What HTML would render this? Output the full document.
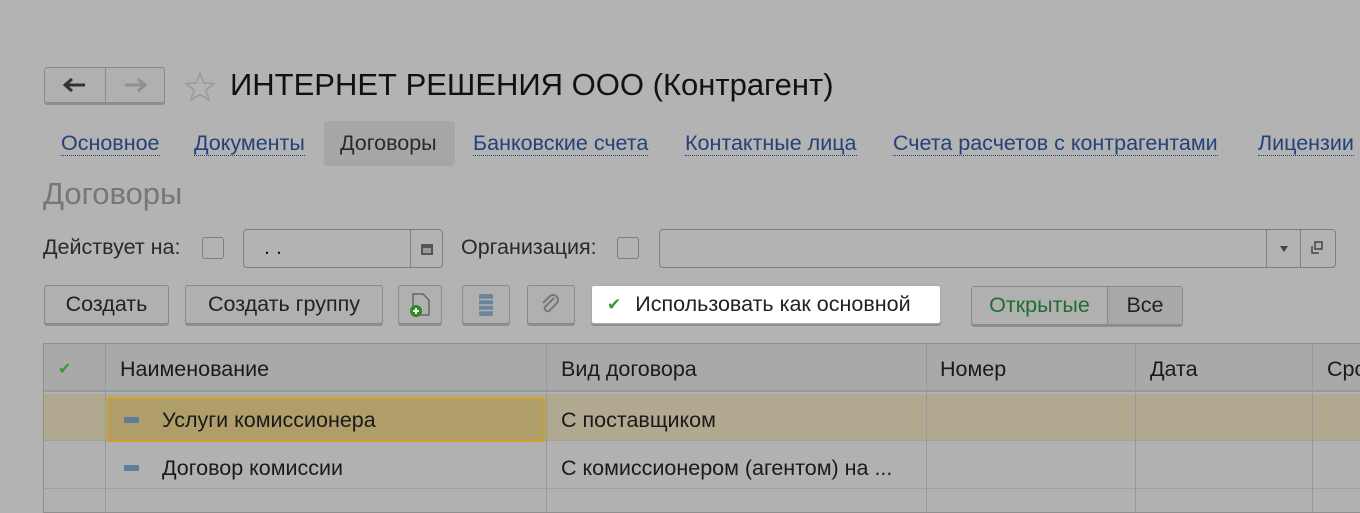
<!DOCTYPE html>
<html><head><meta charset="utf-8"><style>
*{box-sizing:border-box;margin:0;padding:0}
body{width:1360px;height:503px;overflow:hidden;background:#b3b3b3;font-family:"Liberation Sans",sans-serif;color:#1a1a1a;position:relative}
.a{position:absolute}
.btn{position:absolute;border:1px solid #8a8a8a;border-radius:3px;background:#b0b0b0;box-shadow:0 2px 0 #8e8e8e;font-size:21.5px;color:#222;display:flex;align-items:center;justify-content:center}
.tab{position:absolute;top:131px;font-size:21.5px;color:#23427a;border-bottom:1px dotted #23427a;line-height:24px}
.cb{position:absolute;width:22px;height:22px;border:1px solid #7e7e7e;border-radius:3px}
.col{position:absolute;top:0;height:100%;border-left:1px solid #999}
.t{font-size:21.5px}
</style></head><body>
<div class="btn" style="left:44px;top:67px;width:121px;height:36px;justify-content:flex-start">
 <div style="width:61px;height:34px;border-right:1px solid #8a8a8a;display:flex;align-items:center;justify-content:center"><svg width="24" height="16"><path d="M2 8H22M9 2L2 8L9 14" stroke="#333" stroke-width="3" fill="none"/></svg></div>
 <div style="width:58px;display:flex;justify-content:center"><svg width="24" height="16"><path d="M2 8H22M15 2L22 8L15 14" stroke="#909090" stroke-width="3" fill="none"/></svg></div>
</div>
<svg class="a" style="left:184px;top:71px" width="32" height="32"><path d="M16 2L20 12L30 12.5L22 19L25 29L16 23.5L7 29L10 19L2 12.5L12 12Z" fill="none" stroke="#999" stroke-width="1.5"/></svg>
<div class="a" style="left:230px;top:67px;font-size:31px;color:#111">ИНТЕРНЕТ РЕШЕНИЯ ООО (Контрагент)</div>
<div class="a" style="left:324px;top:121px;width:131px;height:45px;background:#a6a6a6;border-radius:4px"></div>
<div class="tab" style="left:61px">Основное</div>
<div class="tab" style="left:194px">Документы</div>
<div class="tab" style="left:340px;border:none;color:#2a2a2a">Договоры</div>
<div class="tab" style="left:473px">Банковские счета</div>
<div class="tab" style="left:685px">Контактные лица</div>
<div class="tab" style="left:893px">Счета расчетов с контрагентами</div>
<div class="tab" style="left:1258px">Лицензии</div>
<div class="a" style="left:43px;top:176px;font-size:31px;color:#777">Договоры</div>
<div class="a t" style="left:43px;top:235px;color:#2a2a2a">Действует на:</div>
<div class="cb" style="left:202px;top:237px"></div>
<div class="a" style="left:243px;top:229px;width:200px;height:39px;border:1px solid #7e7e7e;border-radius:4px">
 <div class="a t" style="left:20px;top:5px">. .</div>
 <div class="a" style="left:166px;top:0;height:37px;border-left:1px solid #7e7e7e;width:32px;display:flex;align-items:center;justify-content:center"><svg width="14" height="14"><rect x="1" y="2" width="12" height="11" fill="#555"/><rect x="3" y="6" width="8" height="5" fill="#999"/></svg></div>
</div>
<div class="a t" style="left:461px;top:235px;color:#2a2a2a">Организация:</div>
<div class="cb" style="left:617px;top:237px"></div>
<div class="a" style="left:659px;top:229px;width:677px;height:39px;border:1px solid #7e7e7e;border-radius:4px">
 <div class="a" style="left:606px;top:0;height:37px;width:35px;border-left:1px solid #7e7e7e;border-right:1px solid #7e7e7e;display:flex;align-items:center;justify-content:center"><svg width="8" height="6"><path d="M0 0H8L4 6Z" fill="#444"/></svg></div>
 <div class="a" style="left:650px;top:11px"><svg width="14" height="14"><rect x="5" y="1" width="7" height="7" fill="none" stroke="#444" stroke-width="1.5"/><path d="M2 5V12H9" fill="none" stroke="#444" stroke-width="1.5"/></svg></div>
</div>
<div class="btn" style="left:44px;top:285px;width:125px;height:39px">Создать</div>
<div class="btn" style="left:185px;top:285px;width:198px;height:39px">Создать группу</div>
<div class="btn" style="left:398px;top:285px;width:44px;height:39px"><svg width="24" height="26"><path d="M5 2H15L21 8V23H5Z" fill="none" stroke="#666" stroke-width="1.5"/><circle cx="8" cy="19" r="6" fill="#2a8a2a"/><path d="M8 16V22M5 19H11" stroke="#fff" stroke-width="2"/></svg></div>
<div class="btn" style="left:462px;top:285px;width:48px;height:39px"><svg width="16" height="24"><rect x="1" y="1" width="14" height="22" rx="2" fill="#6f8497"/><path d="M1 6.5H15M1 12H15M1 17.5H15" stroke="#a7b3bd" stroke-width="1.5"/></svg></div>
<div class="btn" style="left:527px;top:285px;width:48px;height:39px"><svg width="22" height="22"><path d="M14 4L5 13a3 3 0 0 0 4 4L17 9a5 5 0 0 0-7-7L3 9" fill="none" stroke="#777" stroke-width="2"/></svg></div>
<div class="btn" style="left:591px;top:285px;width:350px;height:39px;background:#fff;border-color:#aaa;justify-content:flex-start;padding-left:15px"><span style="color:#3a9a3a;font-size:17px;margin-right:14px">✔</span>Использовать как основной</div>
<div class="btn" style="left:971px;top:286px;width:212px;height:39px;justify-content:flex-start">
 <div style="width:136px;height:37px;border-right:1px solid #8a8a8a;display:flex;align-items:center;justify-content:center;color:#1e6e2e">Открытые</div>
 <div style="flex:1;height:37px;display:flex;align-items:center;justify-content:center;background:#a8a8a8">Все</div>
</div>
<div class="a" style="left:43px;top:343px;width:1330px;height:170px;border:1px solid #8e8e8e;background:#b1b1b1">
 <div class="a" style="left:0;top:0;width:100%;height:48px;background:#a9a9a9;border-bottom:2px solid #999"></div>
 <div class="a" style="left:0;top:50px;width:100%;height:47px;background:#b0a98f;border-bottom:1px solid #a0a0a0"></div>
 <div class="a" style="left:0;top:98px;width:100%;height:47px;border-bottom:1px solid #a0a0a0"></div>
 <div class="col" style="left:61px"></div><div class="col" style="left:502px"></div><div class="col" style="left:882px"></div><div class="col" style="left:1091px"></div><div class="col" style="left:1268px"></div>
 <div class="a" style="left:63px;top:54px;width:438px;height:44px;background:#b09e6a;border:2px solid #c9a227"></div>
 <div class="a" style="left:14px;top:15px;color:#3a9a3a;font-size:16px">✔</div>
 <div class="a t" style="left:76px;top:13px">Наименование</div>
 <div class="a t" style="left:517px;top:13px">Вид договора</div>
 <div class="a t" style="left:896px;top:13px">Номер</div>
 <div class="a t" style="left:1106px;top:13px">Дата</div>
 <div class="a t" style="left:1283px;top:13px">Сро</div>
 <div class="a" style="left:80px;top:73px;width:15px;height:6px;background:#5f7d99;border-radius:1px"></div>
 <div class="a t" style="left:118px;top:64px">Услуги комиссионера</div>
 <div class="a t" style="left:517px;top:64px">С поставщиком</div>
 <div class="a" style="left:80px;top:121px;width:15px;height:6px;background:#5f7d99;border-radius:1px"></div>
 <div class="a t" style="left:118px;top:112px">Договор комиссии</div>
 <div class="a t" style="left:517px;top:112px">С комиссионером (агентом) на ...</div>
</div>
</body></html>
